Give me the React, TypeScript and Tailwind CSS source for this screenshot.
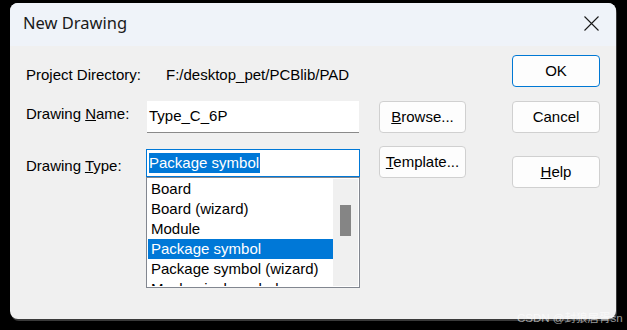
import React from "react";

const ui = { fontFamily: '"Liberation Sans", Arial, sans-serif' };
const title = { fontFamily: '"Noto Sans", "Open Sans", sans-serif' };

function Btn({ children, primary }: { children: React.ReactNode; primary?: boolean }) {
  return (
    <div
      className={
        "h-[32px] flex items-center justify-center rounded-[4px] bg-[#fdfdfd] text-[15px] text-black border " +
        (primary ? "border-[#0078d4]" : "border-[#d0d0d0]")
      }
    >
      {children}
    </div>
  );
}

export default function App() {
  const items = [
    "Board",
    "Board (wizard)",
    "Module",
    "Package symbol",
    "Package symbol (wizard)",
    "Mechanical symbol",
  ];
  return (
    <div className="relative w-[627px] h-[330px] bg-black overflow-hidden pt-[3px] pl-[10px]" style={ui}>
      <div className="w-[606px] h-[316px] rounded-[8px] overflow-hidden bg-[#f0f0f0] shadow-[1px_2px_0_#3a3a3a] flex flex-col">
        {/* Title bar */}
        <div className="h-[43px] bg-[#eff3f9] flex items-center justify-between pl-[13px] pr-[17px]">
          <span className="text-[16.5px] text-[#1a1a1a] leading-none mt-[-2px]" style={title}>
            New Drawing
          </span>
          <svg width="15" height="15" viewBox="0 0 15 15" className="mt-[-2px]">
            <path d="M0.5 0.5 L14.5 14.5 M14.5 0.5 L0.5 14.5" stroke="#1a1a1a" strokeWidth="1.1" fill="none" />
          </svg>
        </div>
        {/* Body */}
        <div className="flex pl-[16px] text-[15px] text-black">
          {/* Column A */}
          <div className="w-[334px] flex flex-col">
            <div className="mt-[18px] h-[22px] flex items-center leading-[22px]">
              <span className="w-[140px]">Project Directory:</span>
              <span>F:/desktop_pet/PCBlib/PAD</span>
            </div>
            <div className="mt-[15px] h-[32px] flex items-start">
              <span className="w-[121px] pt-[2px] leading-[22px]">
                Drawing <u>N</u>ame:
              </span>
              <div className="w-[212px] h-[32px] bg-white border-b border-[#8a8a8a] pl-[2px] pt-[4px] leading-[22px]">
                Type_C_6P
              </div>
            </div>
            <div className="mt-[16px] flex items-start">
              <span className="w-[120px] pt-[6px] leading-[22px]">
                Drawing <u>T</u>ype:
              </span>
              <div className="w-[214px] flex flex-col">
                <div className="h-[28px] border border-[#0078d7] bg-white pl-[2px] pt-[2px]">
                  <span className="inline-block h-[20px] leading-[20px] bg-[#0078d7] text-white pr-[1px]">
                    Package symbol
                  </span>
                </div>
                <div className="h-[111px] border border-[#828790] bg-white p-[1px] flex overflow-hidden">
                  <div className="w-[185px] flex flex-col overflow-hidden">
                    {items.map((it) => (
                      <div
                        key={it}
                        className={
                          "h-[20px] shrink-0 leading-[20px] pl-[3px] whitespace-nowrap " +
                          (it === "Package symbol" ? "bg-[#0078d7] text-white" : "")
                        }
                      >
                        {it}
                      </div>
                    ))}
                  </div>
                  <div className="w-[25px] bg-[#f0f0f0] pt-[26px] pl-[7px]">
                    <div className="w-[11px] h-[31px] bg-[#858585]" />
                  </div>
                </div>
              </div>
            </div>
          </div>
          {/* Column B */}
          <div className="ml-[19px] w-[87px] flex flex-col mt-[55px] gap-[13px]">
            <Btn>
              <span><u>B</u>rowse...</span>
            </Btn>
            <Btn>
              <span><u>T</u>emplate...</span>
            </Btn>
          </div>
          {/* Column C */}
          <div className="ml-[46px] w-[88px] flex flex-col mt-[9px]">
            <Btn primary>OK</Btn>
            <div className="mt-[14px]">
              <Btn>Cancel</Btn>
            </div>
            <div className="mt-[23px]">
              <Btn>
                <span><u>H</u>elp</span>
              </Btn>
            </div>
          </div>
        </div>
      </div>
      <div
        className="absolute left-[517px] top-[311px] text-[11.5px] leading-[14px] text-white/60 whitespace-nowrap"
        style={{ fontFamily: '"Liberation Sans", "Noto Sans CJK SC", sans-serif' }}
      >
        CSDN @封狼居胥sn
      </div>
    </div>
  );
}
